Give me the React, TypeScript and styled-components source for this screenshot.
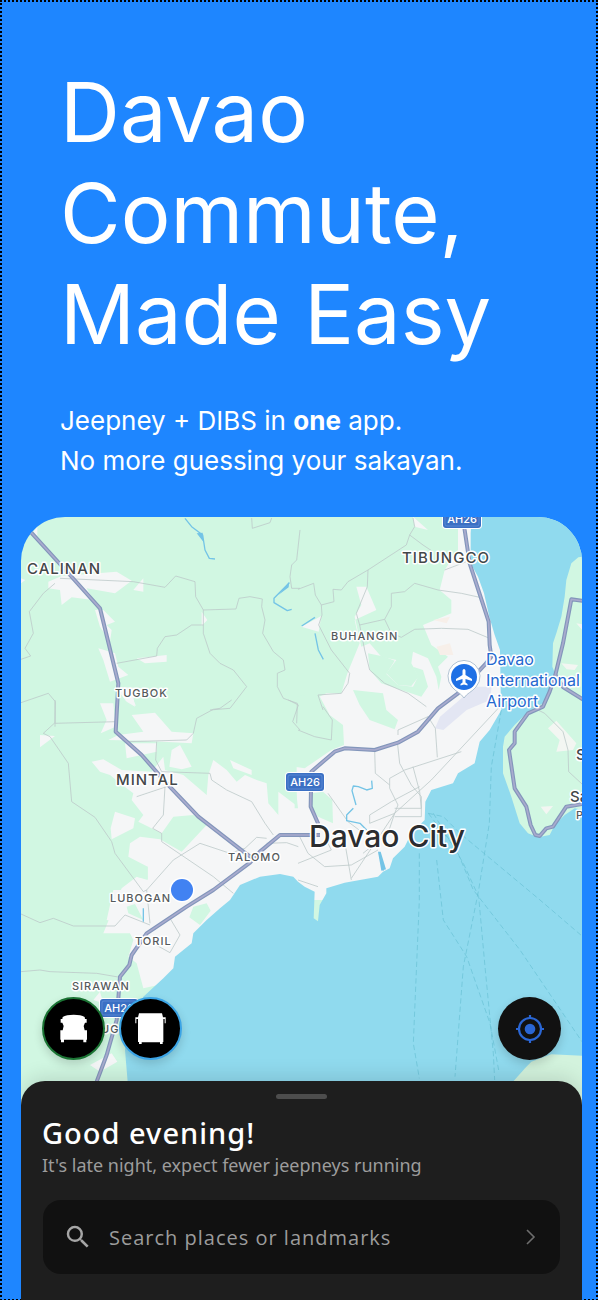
import React from "react";
import styled, { createGlobalStyle } from "styled-components";
import { MdSearch } from "react-icons/md";

const GlobalStyle = createGlobalStyle`
  *, *::before, *::after { box-sizing: border-box; }
  body { margin: 0; background: #1e86ff; }
`;

const Page = styled.main`
  display: flex;
  flex-direction: column;
  min-height: 100vh;
  border: 2px dotted #000;
  background: #1e86ff;
  font-family: Inter, "Liberation Sans", sans-serif;
  color: #fff;
`;

const Hero = styled.header`
  padding: 60px 58px 36px;
`;

const Title = styled.h1`
  margin: 0 0 36px;
  font-size: 83px;
  line-height: 101px;
  font-weight: 400;
`;

const Tagline = styled.p`
  margin: 0;
  font-size: 26px;
  line-height: 40px;
  font-weight: 400;
`;

const Phone = styled.section`
  flex: 1;
  display: flex;
  flex-direction: column;
  margin: 0 14px -2px 19px;
  border-radius: 44px 44px 0 0;
  overflow: hidden;
`;

const MapArea = styled.div`
  position: relative;
`;

const MapDrawing = styled.svg`
  display: block;
  width: 100%;
  height: auto;
`;

const MapLabel = styled.text<{ $size?: number; $weight?: number; $color?: string; $track?: number }>`
  font-family: Inter, "Liberation Sans", sans-serif;
  font-size: ${(p) => p.$size ?? 12}px;
  font-weight: ${(p) => p.$weight ?? 500};
  letter-spacing: ${(p) => p.$track ?? 0}px;
  fill: ${(p) => p.$color ?? "#555a5c"};
  stroke: #fff;
  stroke-width: 3px;
  stroke-linejoin: round;
  paint-order: stroke;
`;

const ShieldText = styled.text`
  font-family: Inter, "Liberation Sans", sans-serif;
  font-size: 11px;
  font-weight: 500;
  fill: #fff;
  text-anchor: middle;
`;

const MapControls = styled.div`
  position: absolute;
  left: 21px;
  right: 21px;
  bottom: 45px;
  display: flex;
  align-items: center;
  justify-content: space-between;
`;

const ModeGroup = styled.div`
  display: flex;
  gap: 14px;
`;

const RoundButton = styled.button<{ $ring?: string; $fill?: string }>`
  display: grid;
  place-items: center;
  width: 63px;
  height: 63px;
  padding: 0;
  border: ${(p) => (p.$ring ? `2px solid ${p.$ring}` : "0")};
  border-radius: 50%;
  background: ${(p) => p.$fill ?? "#000"};
  box-shadow: 0 4px 10px rgba(0, 0, 0, 0.16);
  cursor: pointer;
`;

const Sheet = styled.div`
  position: relative;
  flex: 1;
  display: flex;
  flex-direction: column;
  margin-top: -24px;
  padding: 13px 21px 27px;
  border-radius: 24px 24px 0 0;
  background: #1e1e1e;
  box-shadow: 0 -4px 20px rgba(0, 0, 0, 0.12);
  font-family: "Noto Sans", "Open Sans", sans-serif;
`;

const Handle = styled.div`
  align-self: center;
  width: 51px;
  height: 5px;
  border-radius: 3px;
  background: #4d4d4d;
`;

const Greeting = styled.h2`
  margin: 14px 0 0;
  font-size: 29px;
  line-height: 40px;
  font-weight: 500;
  letter-spacing: 1px;
  color: #fff;
`;

const Notice = styled.p`
  margin: 0;
  font-size: 18px;
  line-height: 24px;
  color: #9c9c9c;
`;

const SearchBar = styled.label`
  display: flex;
  align-items: center;
  gap: 16px;
  height: 74px;
  margin: 23px 1px 0;
  padding: 0 20px;
  border-radius: 18px;
  background: #111;
  color: #a6a6a6;
`;

const SearchInput = styled.input`
  flex: 1;
  min-width: 0;
  padding: 0;
  border: 0;
  outline: 0;
  background: transparent;
  font-family: "Open Sans", "Noto Sans", sans-serif;
  font-size: 20px;
  letter-spacing: 1px;
  color: #fff;
  &::placeholder { color: #9c9c9c; opacity: 1; }
`;

const mainRoads = [
  "M85 1588L210 1725L300 1825L355 2050L347 2195L425 2265L500 2350L595 2450L730 2555L765 2580",
  "M270 3320L290 3245L320 3165L350 3060L360 2930L388 2895L395 2865L440 2800L560 2720L640 2670L750 2588L780 2555L840 2505L960 2505",
  "M955 2472L932 2420L934 2315L1004 2255L1034 2245L1124 2250L1194 2228L1254 2195L1314 2125L1374 2080L1454 1995L1474 1970L1469 1935L1466 1865L1409 1690L1394 1590L1391 1551",
  "M1760 1804L1714 1798L1689 1930L1666 2025L1649 2075L1629 2120L1584 2140L1544 2195L1544 2230L1527 2250L1544 2365L1579 2420L1592 2475L1606 2505L1619 2508L1639 2485L1659 2480L1699 2420L1760 2410",
  "M1666 2025L1690 2062L1760 2105",
];

const urbanNorthWest =
  "M145 215L185 198L350 185L395 212L345 250L260 235L280 270L215 262L185 285L180 240L145 235ZM400 240L430 205V245ZM285 300H310L345 335L320 345L335 360L330 395L300 350ZM295 415L345 430L355 470L385 495L330 515L310 450ZM410 445L500 435V455L435 460ZM605 305L622 330L605 348ZM345 530L435 535L400 560L405 590L380 575ZM100 65L112 50V78ZM63 205L76 210L63 220Z";
const urbanNorthEast =
  "M480 0H620V640H60L55 565L85 550L130 550L145 500L150 485L185 400L170 330L235 300L205 230H175L190 285L170 320L190 410L215 400L250 440L295 450L265 490L300 525L340 528L362 500L340 460L345 425L390 445L415 500L422 540L430 500L420 470L450 440L400 405L375 345L460 310V270L425 240L440 180L480 120ZM345 20L390 60L350 50ZM10 350L70 318L62 365Z";
const urbanWest =
  "M300 10H340L347 80L302 100L320 60ZM375 0H400L408 18ZM395 45L465 38L515 95L580 100L575 130L430 122L325 120L355 105L430 95ZM375 130H470V155L380 175ZM515 150L540 135L575 200L545 208L508 200ZM120 105L165 108L120 142ZM275 185L310 178L365 210L455 215L490 170L495 210L550 225L620 285L625 225L640 180L680 210L710 245L735 225L770 240L800 250L805 310L835 345V275L900 325V700H310L365 565L410 530L443 537V500L385 470L390 430L420 410L480 418L545 455L620 375L580 345L520 350L485 400L415 365L430 345L395 300L400 280L360 250L330 225L300 215ZM345 335L405 355L400 385L335 418L332 385ZM690 180L755 210V225L700 205Z";
const urbanSouthWest =
  "M340 0L320 90L375 100L400 150L385 200L410 220L430 295L520 275L760 60V0ZM270 525L335 490L352 515L300 545ZM280 330L300 305L310 340Z";

const minorRoads: Array<[number, number, string]> = [
  [0, 1530, "M180 205L400 215L495 232L527 198L585 215L587 260L610 300V370L630 430L660 460L700 480L740 530L690 595L630 600M610 300L708 297L717 265L750 260L787 267L785 290L795 330L788 370L820 425L850 450L855 480L832 490L832 530L850 565L892 580L890 640M350 460L470 438L472 415L495 380L530 375L575 345H610M165 220L130 250L88 305L100 370L75 415L92 438L63 448M63 578L145 550L166 575L165 650M755 24L757 55L810 38L815 24M900 60L890 150L875 165L870 200L875 235L900 235"],
  [894, 1530, "M0 238L47 220L52 255L70 285L108 275L105 238L130 240L150 215L210 180L325 105L335 75L350 50L345 24M335 75L375 105L405 125M210 180L208 230L175 310L185 345L200 420L215 480L260 520L330 550L385 590M70 285L72 315L62 345L100 420L155 490L150 520L130 550M185 345L260 328L280 290V250L320 245L350 220L420 240L490 250L545 262M260 328L280 370L310 382L350 358L430 355L510 358L570 383M440 180L505 155M130 550L60 555L75 600"],
  [0, 2100, "M165 0V68L130 100L150 110L205 190L215 305L285 352L335 425L345 460L430 575L440 570L520 480L600 430L690 460L735 445L770 412L800 415M165 70L350 65M385 125L560 120L580 100L590 55L640 28L660 25L695 0M470 125L467 180L485 215L630 220L635 240L680 270L755 305L795 370L820 405M495 260L490 345L458 385L485 400V425L640 530L700 580M865 0L895 15L878 65L900 90M410 290L500 260M800 430L860 428L895 440"],
  [894, 2100, "M0 90L50 110L100 120L103 60L75 20M610 15L400 240L290 340L160 535M490 155L320 210L275 235V265L300 315L290 340L215 370V345L280 305L365 260M345 200L365 275L370 325H290M340 255L370 290V350H290M290 340L270 400L195 460M298 125L305 190L340 255M230 150L232 220L275 255M300 105V90L390 50L412 85L418 172M0 400L30 460L80 500L160 495L240 450M0 490L100 450L80 410M0 540L60 560M140 425L160 540M90 280L150 365L190 395M700 20L740 40L795 95L810 150L812 215L852 252"],
  [0, 2670, "M63 72L120 98L160 85L220 108H345L375 75L450 105M63 245L120 240L150 245L290 250L360 262M440 0L450 100M510 85L540 135L510 188L450 155"],
];

function Shield({ x, y }: { x: number; y: number }) {
  return (
    <g transform={`translate(${x} ${y})`}>
      <rect x="-20" y="-10" width="40" height="20" rx="4" fill="#fff" />
      <rect x="-19" y="-9" width="38" height="18" rx="3" fill="#3b70c4" />
      <rect x="-17" y="-7" width="34" height="14" rx="2" fill="none" stroke="#6c98dd" strokeWidth="0.6" />
      <ShieldText y="4">AH26</ShieldText>
    </g>
  );
}

function CityMap() {
  return (
    <MapDrawing viewBox="21 517 561 588" role="img" aria-label="Map of Davao City">
      <rect x="21" y="517" width="561" height="588" fill="#d1f7e2" />
      <g transform="scale(0.33333)">
        <g fill="#f5f6f7">
          <path transform="translate(0 1530)" d={urbanNorthWest} />
          <path transform="translate(894 1530)" d={urbanNorthEast} />
          <path transform="translate(0 2100)" d={urbanWest} />
          <path d="M890 2100H1520V2700H890Z" />
          <path transform="translate(0 2670)" d={urbanSouthWest} />
        </g>
        <g fill="#d1f7e2">
          <path transform="translate(894 2100)" d="M-10 -10L60 -20L95 45L135 75L138 135L100 150L20 205L-10 200ZM165 -30L255 -20L265 30L300 60L290 88L215 60L185 15ZM75 275L103 300L105 370L60 350L40 320V280ZM-10 235L0 325L-10 325Z" />
          <path transform="translate(894 1530)" d="M210 430L260 440L290 452L265 492L300 525L345 530L360 500L345 470L375 480L390 530L370 560L250 520L215 480ZM190 350L260 330L275 350L270 380L200 375Z" />
          <path transform="translate(0 2670)" d="M580 50L620 40L632 62L600 105L568 82ZM380 50L405 42L430 90L385 70Z" />
          <path transform="translate(0 2100)" d="M395 500L443 500V540L410 530Z" />
        </g>
        <path fill="#f7efe9" d="M1310 1940L1350 1930L1360 1965L1320 1965ZM1300 1860L1350 1850L1340 1870Z" />
        <path fill="#e3e6f3" d="M1305 2185L1320 2150L1390 2090L1430 2060L1475 2060L1470 2100L1400 2130L1330 2190Z" />

        <path
          fill="#90daee"
          d="M1416 1540L1412 1600V1690L1434 1730L1452 1780L1468 1850L1484 1905L1500 1950L1502 2070L1504 2130L1469 2190L1439 2225L1424 2290L1374 2320L1359 2350L1294 2370L1276 2405L1274 2460L1234 2500L1214 2540L1179 2575L1169 2605L1149 2615L1134 2630L1034 2648L979 2665V2680L959 2715L954 2764L941 2755L944 2675L914 2660L894 2645L880 2630L840 2622L780 2630L720 2655L690 2700L660 2725L620 2760L580 2800L575 2830L525 2870L520 2905L490 2935L430 2990L385 3070L375 3150L383 3245V3330H1760V1540Z"
        />
        <path
          fill="#d1f7e2"
          d="M1760 1668L1735 1672L1714 1690L1699 1740L1694 1790L1684 1850L1669 1900L1659 1930L1657 2000L1669 2030L1650 2075L1629 2110L1584 2135L1544 2175L1514 2210L1509 2240V2320L1534 2390L1559 2470L1584 2500L1614 2512L1649 2505L1664 2475L1694 2445L1724 2425L1760 2432Z"
        />
        <path fill="#d3f3dd" d="M1539 3245L1575 3205L1594 3185L1654 3163L1760 3168V3330H1480Z" />
        <path fill="#f3f6f2" d="M1644 2185L1669 2162L1729 2230L1719 2250L1669 2255L1679 2220ZM1622 2420L1659 2418L1639 2443ZM1729 1870L1760 1875V1905ZM1684 1990L1734 1995L1724 2010L1700 2008Z" />

        <g fill="none" stroke="#bcc9c9" strokeWidth="2.4" strokeLinejoin="round">
          {minorRoads.map(([x, y, d]) => (
            <path key={`${x}-${y}`} transform={`translate(${x} ${y})`} d={d} />
          ))}
        </g>

        <g fill="none" stroke="#74c4e6" strokeWidth="4" strokeLinejoin="round">
          <path d="M555 1555L575 1580L608 1605L615 1650L628 1675L645 1677M868 1748L822 1795V1808L862 1832L875 1828M905 1878L945 1852M945 1900L955 1950L970 1978M430 2725V2765" />
          <path d="M1115 2342L1117 2365L1100 2370L1075 2360L1060 2358L1056 2372L1068 2415M1060 2425L1040 2445L1040 2462L1080 2470L1100 2490M1138 2560L1150 2612" />
        </g>
        <path fill="#74c4e6" d="M590 1600L608 1598L610 1625ZM868 1745L866 1762L835 1785ZM1134 2555L1142 2555L1158 2608L1144 2612Z" />

        <g fill="none" stroke="#66c0d3" strokeWidth="2" strokeDasharray="16 9">
          <path d="M1504 2130L1474 2300L1468 2470L1436 2670L1390 2900L1365 3230" />
          <path d="M1285 2440L1330 2450L1380 2500L1620 2700L1746 2808" />
          <path d="M1285 2440L1370 2550L1420 2670L1560 2850L1746 3125" />
          <path d="M1300 2440L1390 2590L1436 2690L1455 2900L1480 3160L1484 3240" />
          <path d="M1258 2560V2700L1240 3130L1258 3235" />
          <path d="M1310 2580L1330 2760L1400 2870L1470 3070L1496 3210" />
        </g>

        <g fill="none" strokeLinejoin="round">
          {mainRoads.map((d) => <path key={d} d={d} stroke="#8396bb" strokeWidth="12" />)}
          {mainRoads.map((d) => <path key={d} d={d} stroke="#a9abce" strokeWidth="5" />)}
        </g>
      </g>

      <Shield x={462} y={519} />
      <Shield x={305} y={782} />
      <Shield x={119} y={1008} />

      <MapLabel x="27" y="574" $size={15} $track={1} $color="#434749">CALINAN</MapLabel>
      <MapLabel x="402" y="563" $size={15} $track={1} $color="#434749">TIBUNGCO</MapLabel>
      <MapLabel x="116" y="785" $size={15} $track={1} $color="#434749">MINTAL</MapLabel>
      <MapLabel x="331" y="640" $size={11} $track={1}>BUHANGIN</MapLabel>
      <MapLabel x="115" y="697" $size={11} $track={1}>TUGBOK</MapLabel>
      <MapLabel x="228" y="861" $size={11} $track={1}>TALOMO</MapLabel>
      <MapLabel x="110" y="902" $size={11} $track={1}>LUBOGAN</MapLabel>
      <MapLabel x="135" y="945" $size={11} $track={1}>TORIL</MapLabel>
      <MapLabel x="72" y="990" $size={11} $track={1}>SIRAWAN</MapLabel>
      <MapLabel x="101" y="1033" $size={11} $track={1}>UG</MapLabel>
      <MapLabel x="309" y="847" $size={30} $color="#2b2d30">Davao City</MapLabel>
      <MapLabel x="576" y="760" $size={15} $color="#434749">S</MapLabel>
      <MapLabel x="570" y="802" $size={15} $color="#434749">Sa</MapLabel>
      <MapLabel x="576" y="819" $size={11}>P</MapLabel>
      <MapLabel x="486" y="665" $size={16} $weight={400} $color="#2468cf">Davao</MapLabel>
      <MapLabel x="486" y="686" $size={16} $weight={400} $color="#2468cf">International</MapLabel>
      <MapLabel x="486" y="707" $size={16} $weight={400} $color="#2468cf">Airport</MapLabel>

      <g transform="translate(464 677)">
        <path d="M0 21C-3 16-8 15-12 10A16 16 0 1 1 12 10C8 15 3 16 0 21Z" fill="#fff" stroke="#9fb4c8" strokeWidth="0.8" />
        <circle r="13" fill="#1f70e5" />
        <path d="M0-8C1-8 1.500-7 1.500-6V-2L8 2V4L1.500 2V5.500L3.500 7V8.500L0 7.500L-3.500 8.500V7L-1.500 5.500V2L-8 4V2L-1.500-2V-6C-1.500-7-1-8 0-8Z" fill="#fff" />
      </g>
      <circle cx="182" cy="890" r="12.500" fill="#fff" />
      <circle cx="182" cy="890" r="11" fill="#4182f2" />
    </MapDrawing>
  );
}

function JeepneyIcon() {
  return (
    <svg width="31" height="31" viewBox="173 371 93 93" fill="#fff" aria-hidden="true">
      <path d="M187 383C194 378 206 376 220 376S246 378 253 383L254 389H259V400H254L250 410L253 423H260V451H258V459H249V451H191V459H182V451H180V423H187L190 410L186 400H181V389H186Z" />
    </svg>
  );
}

function BusIcon() {
  return (
    <svg width="31" height="31" viewBox="403 370 93 93" fill="#fff" aria-hidden="true">
      <path d="M415 371H484L487 383H495V401H492V388H488V457H486V463H478V458H423V463H415V457H412V388H407V401H404V383H412Z" />
    </svg>
  );
}

function LocateIcon() {
  return (
    <svg width="28" height="28" viewBox="0 0 28 28" fill="none" stroke="#2a66d4" strokeWidth="2.200" aria-hidden="true">
      <circle cx="14" cy="14" r="11" />
      <circle cx="14" cy="14" r="5.300" fill="#2a66d4" stroke="none" />
      <path d="M14 0V4M14 24V28M0 14H4M24 14H28" />
    </svg>
  );
}

export default function App() {
  return (
    <>
      <GlobalStyle />
      <Page>
        <Hero>
          <Title>Davao<br />Commute,<br />Made Easy</Title>
          <Tagline>
            Jeepney + DIBS in <strong>one</strong> app.<br />
            No more guessing your sakayan.
          </Tagline>
        </Hero>
        <Phone>
          <MapArea>
            <CityMap />
            <MapControls>
              <ModeGroup>
                <RoundButton type="button" $ring="#1b7434" aria-label="Jeepney routes"><JeepneyIcon /></RoundButton>
                <RoundButton type="button" $ring="#3ba4e6" aria-label="Bus routes"><BusIcon /></RoundButton>
              </ModeGroup>
              <RoundButton type="button" $fill="#111" aria-label="My location"><LocateIcon /></RoundButton>
            </MapControls>
          </MapArea>
          <Sheet>
            <Handle />
            <Greeting>Good evening!</Greeting>
            <Notice>It's late night, expect fewer jeepneys running</Notice>
            <SearchBar>
              <MdSearch size={30} aria-hidden="true" />
              <SearchInput type="text" aria-label="Search places or landmarks" placeholder="Search places or landmarks" />
              <svg width="18" height="18" viewBox="0 0 18 18" fill="none" stroke="#6e6e6e" strokeWidth="1.600" aria-hidden="true">
                <path d="M5 2L12 9L5 16" />
              </svg>
            </SearchBar>
          </Sheet>
        </Phone>
      </Page>
    </>
  );
}
